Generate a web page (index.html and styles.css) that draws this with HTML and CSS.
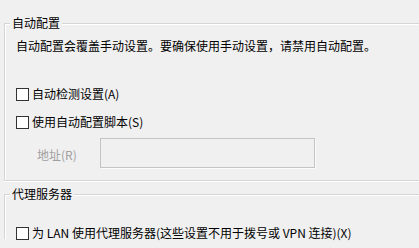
FILE: index.html
```html
<!DOCTYPE html>
<html lang="zh-CN">
<head>
<meta charset="utf-8">
<link rel="stylesheet" href="styles.css">
</head>
<body>
<div class="page">
  <fieldset class="group group-auto">
    <legend class="group-title">自动配置</legend>
    <p class="desc">自动配置会覆盖手动设置。要确保使用手动设置，请禁用自动配置。</p>
    <label class="check check-first"><span class="box"></span><span>自动检测设置(A)</span></label>
    <label class="check check-second"><span class="box"></span><span>使用自动配置脚本(S)</span></label>
    <div class="addr-row">
      <span class="addr-label">地址(R)</span>
      <span class="addr-input"></span>
    </div>
  </fieldset>
  <fieldset class="group group-proxy">
    <legend class="group-title">代理服务器</legend>
    <label class="check check-lan"><span class="box"></span><span>为 LAN 使用代理服务器(这些设置不用于拨号或 VPN 连接)(X)</span></label>
  </fieldset>
</div>
</body>
</html>
```
FILE: styles.css
```css
html, body {
  margin: 0;
  padding: 0;
  background: #f0f0f0;
  overflow: hidden;
  width: 419px;
  height: 248px;
}
.page {
  font-family: "Noto Sans CJK SC", "Noto Sans", sans-serif;
  font-size: 12px;
  line-height: 16px;
  color: #000;
  padding: 0 0 0 4px;
  height: 248px;
  box-sizing: border-box;
  overflow: hidden;
}
.group {
  margin: 0;
  padding: 0 0 12px 11px;
  border: 1px solid #d5d5d5;
  border-right: none;
  box-shadow: inset 1px 1px 0 #fff, 0 1px 0 #fff;
  width: 415px;
  box-sizing: border-box;
  min-width: 0;
}
.group-auto {
  margin-top: 16px;
}
.group-proxy {
  margin-top: 6px;
  padding-top: 24px;
  padding-bottom: 0;
  height: 52px;
  border-bottom: none;
  box-shadow: inset 1px 1px 0 #fff;
}
.group-title {
  padding: 0 2px;
  margin-left: -6px;
  line-height: 14px;
  background: #f0f0f0;
}
.desc {
  margin: 8px 0 0 0;
  white-space: nowrap;
}
.check {
  display: flex;
  align-items: center;
  gap: 3px;
  height: 16px;
  white-space: nowrap;
}
.check-first {
  margin-top: 32px;
}
.check-second {
  margin-top: 12px;
}
.box {
  width: 11px;
  height: 11px;
  border: 1px solid #333;
  background: #fff;
  flex: none;
}
.addr-row {
  display: flex;
  align-items: center;
  margin-top: 8px;
  height: 30px;
}
.addr-label {
  color: #a0a0a0;
  margin-left: 21px;
  width: 63px;
  padding-top: 4px;
}
.addr-input {
  width: 213px;
  height: 28px;
  border: 1px solid #c4c4c4;
  background: #f0f0f0;
  box-shadow: 1px 1px 0 #fbfbfb;
}
```
